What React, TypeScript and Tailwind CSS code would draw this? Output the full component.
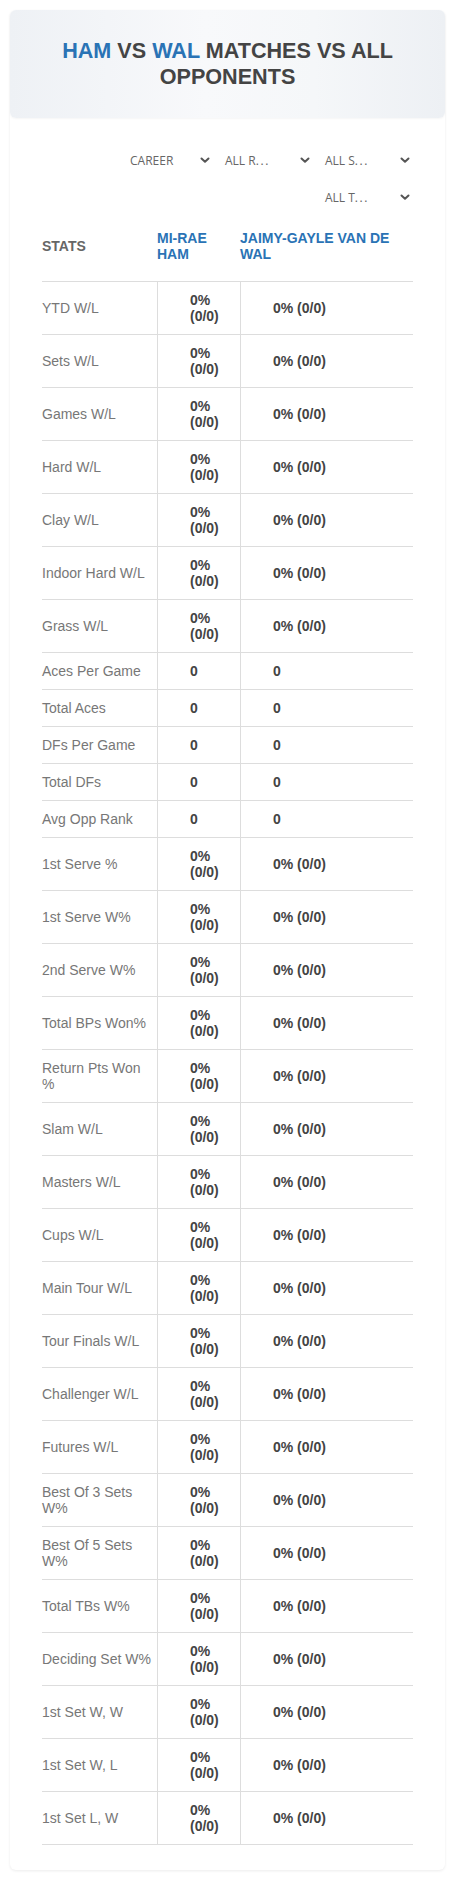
import React from "react";

const rows: [string, boolean][] = [
  ["YTD W/L", true],
  ["Sets W/L", true],
  ["Games W/L", true],
  ["Hard W/L", true],
  ["Clay W/L", true],
  ["Indoor Hard W/L", true],
  ["Grass W/L", true],
  ["Aces Per Game", false],
  ["Total Aces", false],
  ["DFs Per Game", false],
  ["Total DFs", false],
  ["Avg Opp Rank", false],
  ["1st Serve %", true],
  ["1st Serve W%", true],
  ["2nd Serve W%", true],
  ["Total BPs Won%", true],
  ["Return Pts Won %", true],
  ["Slam W/L", true],
  ["Masters W/L", true],
  ["Cups W/L", true],
  ["Main Tour W/L", true],
  ["Tour Finals W/L", true],
  ["Challenger W/L", true],
  ["Futures W/L", true],
  ["Best Of 3 Sets W%", true],
  ["Best Of 5 Sets W%", true],
  ["Total TBs W%", true],
  ["Deciding Set W%", true],
  ["1st Set W, W", true],
  ["1st Set W, L", true],
  ["1st Set L, W", true],
];

function Chevron() {
  return (
    <svg width="10" height="7" viewBox="0 0 10 7" className="shrink-0">
      <polyline points="1.5,1.5 5,4.8 8.5,1.5" fill="none" stroke="#555" strokeWidth="2" strokeLinecap="round" strokeLinejoin="round" />
    </svg>
  );
}

function Select({ label, truncated, first }: { label: string; truncated?: boolean; first?: boolean }) {
  return (
    <div className={`w-[100px] h-[37px] flex items-center justify-between pr-[3px] ${first ? "pl-[17px]" : "pl-[12px]"}`}>
      <span className="text-[12px] text-[#666] font-['Open_Sans',sans-serif]">
        {label}
        {truncated ? <span className="tracking-[1.6px]">...</span> : null}
      </span>
      <Chevron />
    </div>
  );
}

export default function App() {
  return (
    <div className="p-[10px] bg-white font-['Liberation_Sans',Arial,sans-serif]">
      <div className="rounded-[6px] shadow-[0_1px_3px_rgba(0,0,0,0.08)] pb-[25px]">
        <div className="rounded-[6px] bg-[linear-gradient(90deg,#eef1f5_0%,#f8f9fb_45%,#f5f7f9_70%,#edf0f4_100%)] shadow-[0_1px_2px_rgba(0,0,0,0.04)] py-[28px] px-[20px]">
          <h1 className="text-center font-bold text-[21.6px] leading-[26px] text-[#444]">
            <span className="text-[#2a73b5]">HAM</span> VS <span className="text-[#2a73b5]">WAL</span> MATCHES VS ALL OPPONENTS
          </h1>
        </div>

        <div className="px-[32px]">
          <div className="mt-[24px] flex flex-wrap justify-end">
            <Select label="CAREER" first />
            <Select label="ALL R" truncated />
            <Select label="ALL S" truncated />
            <Select label="ALL T" truncated />
          </div>

          <div className="text-[14px] leading-4">
            <div className="grid grid-cols-[115px_83px_1fr] border-b border-[#ddd]">
              <div className="pt-[14px] pb-[19px] flex items-center font-bold text-[#666]">STATS</div>
              <div className="pt-[14px] pb-[19px] font-bold text-[#2a73b5]">MI-RAE HAM</div>
              <div className="pt-[14px] pb-[19px] font-bold text-[#2a73b5]">JAIMY-GAYLE VAN DE WAL</div>
            </div>
            {rows.map(([label, pct]) => (
              <div key={label} className="grid grid-cols-[115px_83px_1fr] border-b border-[#ddd]">
                <div className="py-[10px] pr-[4px] flex items-center text-[#777]">{label}</div>
                <div className="py-[10px] pl-[32px] flex items-center border-l border-[#ddd] font-bold text-[#444]">
                  {pct ? "0% (0/0)" : "0"}
                </div>
                <div className="py-[10px] pl-[32px] flex items-center border-l border-[#ddd] font-bold text-[#444]">
                  {pct ? "0% (0/0)" : "0"}
                </div>
              </div>
            ))}
          </div>
        </div>
      </div>
    </div>
  );
}
